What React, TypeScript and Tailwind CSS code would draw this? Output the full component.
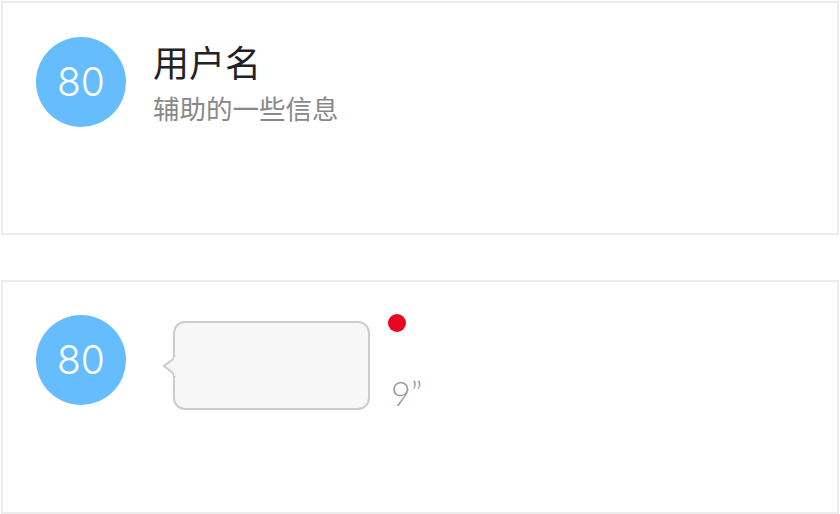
export default function App() {
  const avatar = (
    <div className="w-[90px] h-[90px] rounded-full bg-[#66bdfe] flex items-center justify-center text-white text-[39px] font-light shrink-0" style={{ fontFamily: 'Inter, "Open Sans", sans-serif' }}>
      80
    </div>
  );
  return (
    <div className="w-[840px] h-[514px] bg-white pt-px px-px flex flex-col gap-[45px]" style={{ fontFamily: '"Noto Sans CJK SC", sans-serif' }}>
      <div className="h-[234px] border-2 border-[#ececec] flex items-start pl-[33px] pt-[34px]">
        {avatar}
        <div className="ml-[27px] flex flex-col">
          <div className="text-[36px] leading-[40px] text-[#222] mt-[4px]">用户名</div>
          <div className="text-[26.5px] leading-[30px] text-[#888] mt-[12px]">辅助的一些信息</div>
        </div>
      </div>
      <div className="h-[234px] border-2 border-[#ececec] flex items-start pl-[33px] pt-[33px]">
        {avatar}
        <div className="relative ml-[47px] mt-[6px] w-[197px] h-[89px] rounded-[12px] border-2 border-[#cccccc] bg-[#f7f7f7]">
          <svg className="absolute left-[-13px] top-[32px]" width="14" height="24" viewBox="0 0 14 24">
            <path d="M13 1 C 11 6, 6 7, 2 11 C 6 15, 11 16, 13 22" fill="#f7f7f7" stroke="#cccccc" strokeWidth="2" />
            <rect x="12" y="2" width="3" height="19" fill="#f7f7f7" />
          </svg>
        </div>
        <div className="ml-[18px] flex flex-col">
          <div className="w-[18px] h-[18px] rounded-full bg-[#e9061e] mt-[-1px]"></div>
          <div className="text-[34px] leading-[40px] text-[#999] mt-[41px] ml-[3px] font-light" style={{ fontFamily: 'Lato, sans-serif' }}>9”</div>
        </div>
      </div>
    </div>
  );
}
